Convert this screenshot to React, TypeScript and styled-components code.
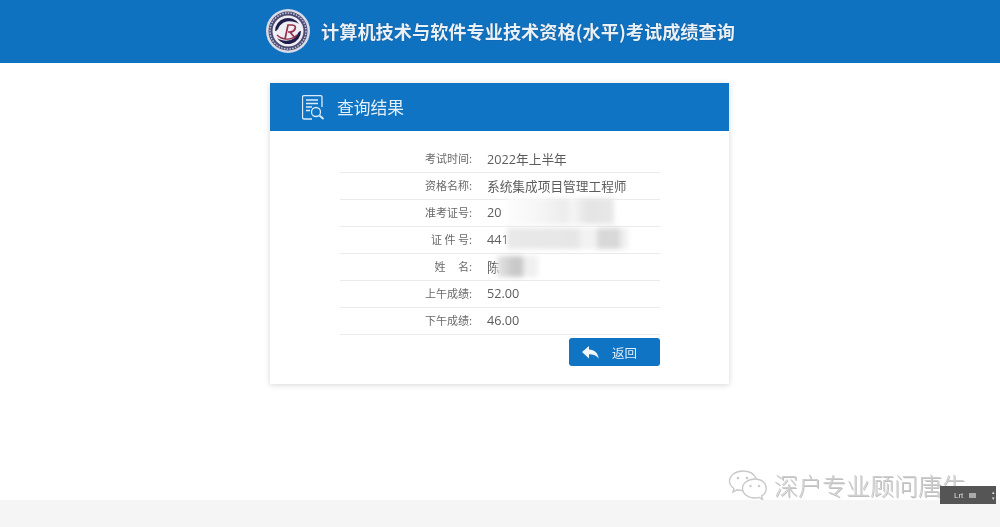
import styled, { createGlobalStyle } from 'styled-components';

const CJK = `"Noto Sans CJK SC", "Liberation Sans", sans-serif`;

const GlobalStyle = createGlobalStyle`
  html, body {
    margin: 0;
    padding: 0;
    background: #fff;
  }
  body {
    font-family: ${CJK};
  }
`;

const masks = {
  exam: {
    left: 166,
    top: -2,
    width: 108,
    height: 26,
    fill: 'linear-gradient(90deg, #fdfdfd 0%, #f6f6f6 30%, #ececec 55%, #f6f6f6 62%, #e4e4e4 75%, #e8e8e8 100%)',
  },
  id: {
    left: 167,
    top: 1,
    width: 121,
    height: 21,
    fill: 'linear-gradient(90deg, #e9e9e9 0%, #e6e6e6 58%, #f2f2f2 62%, #f2f2f2 73%, #d8d8d8 76%, #d8d8d8 92%, #f0f0f0 95%, #f0f0f0 100%)',
  },
  name: {
    left: 157,
    top: 2,
    width: 41,
    height: 21,
    fill: 'linear-gradient(90deg, #e6e6e6 0%, #c9c9c9 40%, #c9c9c9 62%, #f0f0f0 66%, #f0f0f0 100%)',
  },
};

const rows = [
  { label: '考试时间:', value: '2022年上半年' },
  { label: '资格名称:', value: '系统集成项目管理工程师' },
  { label: '准考证号:', value: '20', mask: masks.exam },
  { label: '证 件 号:', value: '441', mask: masks.id },
  { label: '姓\u00a0\u00a0\u00a0\u00a0\u00a0名:', value: '陈', mask: masks.name },
  { label: '上午成绩:', value: '52.00' },
  { label: '下午成绩:', value: '46.00' },
];

const Logo = () => (
  <svg width="44" height="44" viewBox="0 0 44 44">
    <circle cx="22" cy="22" r="22" fill="#d9dbe6" />
    <circle cx="22" cy="22" r="19.500" fill="#4a4a72" />
    <circle cx="22" cy="22" r="18" fill="none" stroke="#c9cad8" strokeWidth="1.400" strokeDasharray="1.500 1.300" />
    <circle cx="22" cy="22" r="15.500" fill="#eeeef3" />
    <path d="M9 22a13 13 0 0 1 24-7c-6-4-16-4-20 3-1 2-2 4-4 4z" fill="#1f1d4a" />
    <path d="M35 22a13 13 0 0 1-24 7c6 4 16 4 20-3 1-2 2-4 4-4z" fill="#1f1d4a" />
    <path d="M11 26c5 5 14 6 20 0" fill="none" stroke="#8d2a42" strokeWidth="1.300" />
    <path d="M19 30l3-14h4c3 0 4 2 3 4s-3 3-5 3l5 6M22 23h2" fill="none" stroke="#94304c" strokeWidth="1.700" />
  </svg>
);

const ResultIcon = () => (
  <svg width="23" height="25" viewBox="0 0 23 25" fill="none" stroke="#dcebf7" strokeWidth="1.300">
    <path d="M10 24H2a1.500 1.500 0 0 1-1.500-1.500V2A1.500 1.500 0 0 1 2 .7h16A1.500 1.500 0 0 1 20 2v10" />
    <path d="M4 5h12M4 8.500h12M4 12h6M4 15.500h4" strokeWidth="1.500" />
    <circle cx="14" cy="17" r="4.500" />
    <path d="M17.500 20.500l4 3.500" strokeWidth="1.800" />
  </svg>
);

const ReplyIcon = () => (
  <svg width="17" height="13" viewBox="0 0 17 13" fill="#f2f7fb">
    <path d="M0 6L7 0v3.500c5.500 0 9 3.500 9.700 9C14.500 9.500 11.500 8.300 7 8.300V12.500z" />
  </svg>
);

const WeChatIcon = () => (
  <svg width="42" height="30" viewBox="0 0 42 30" fill="#fff" stroke="#c9c9c9" strokeWidth="1.400">
    <path d="M15 1C7.500 1 1.500 5.500 1.500 11c0 3 1.800 5.700 4.500 7.500L5 22l4-2.200c1.500.4 3 .7 4.700.7C19 20 29 13 28 8 26 4 21 1 15 1z" />
    <path d="M27 9c-7 0-12.500 4.300-12.500 9.500S20 28 27 28c1.400 0 2.800-.2 4-.6l3.600 2-1-3.200c2.800-1.800 4.600-4.500 4.600-7.700C38.200 13.300 34 9 27 9z" />
    <circle cx="10" cy="8" r="1.300" fill="#c9c9c9" stroke="none" />
    <circle cx="19" cy="8" r="1.300" fill="#c9c9c9" stroke="none" />
    <circle cx="22.500" cy="16" r="1.200" fill="#c9c9c9" stroke="none" />
    <circle cx="31" cy="16" r="1.200" fill="#c9c9c9" stroke="none" />
  </svg>
);

const App = () => {
  return (
    <Page>
      <GlobalStyle />
      <TopBar>
        <Logo />
        <SiteTitle>计算机技术与软件专业技术资格(水平)考试成绩查询</SiteTitle>
      </TopBar>
      <Main>
        <Card>
          <CardHeader>
            <ResultIcon />
            <CardTitle>查询结果</CardTitle>
          </CardHeader>
          <CardBody>
            {rows.map((row) => (
              <Row key={row.label}>
                <Label>{row.label}</Label>
                <Value>{row.value}</Value>
                {row.mask && (
                  <Mask
                    $left={row.mask.left}
                    $top={row.mask.top}
                    $width={row.mask.width}
                    $height={row.mask.height}
                    $fill={row.mask.fill}
                  />
                )}
              </Row>
            ))}
            <Actions>
              <BackButton>
                <ReplyIcon />
                <span>返回</span>
              </BackButton>
            </Actions>
          </CardBody>
        </Card>
      </Main>
      <Footer />
      <Watermark>
        <WeChatIcon />
        <WatermarkText>深户专业顾问唐生</WatermarkText>
      </Watermark>
      <ImeBar>
        <span>Lrt</span>
        <ImeKey />
        <ImeDots>▴▾</ImeDots>
      </ImeBar>
    </Page>
  );
};

const Page = styled.div`
  position: relative;
  width: 1000px;
  height: 527px;
  overflow: hidden;
  display: flex;
  flex-direction: column;
  background: #fff;
`;

const TopBar = styled.header`
  height: 63px;
  flex: none;
  box-sizing: border-box;
  background: #0f72c1;
  display: flex;
  align-items: center;
  justify-content: center;
  gap: 11px;
  padding: 0 0 1px 1px;

  svg,
  h1 {
    filter: blur(0.5px);
  }
`;

const SiteTitle = styled.h1`
  margin: 0;
  font-size: 18.200px;
  font-weight: 700;
  color: #e8f1f8;
  white-space: nowrap;
  text-shadow: 0 0 1px rgba(0, 30, 70, 0.7);
`;

const Main = styled.main`
  flex: 1;
  display: flex;
  justify-content: center;
  padding: 20px 1px 0 0;
`;

const Card = styled.section`
  width: 459px;
  height: 301px;
  background: #fff;
  box-shadow: 0 1px 6px rgba(0, 0, 0, 0.16);
`;

const CardHeader = styled.div`
  height: 48px;
  background: #0f74c4;
  display: flex;
  align-items: center;
  gap: 12px;
  padding-left: 32px;

  svg,
  h2 {
    filter: blur(0.4px);
  }
`;

const CardTitle = styled.h2`
  margin: 0;
  font-size: 16.800px;
  font-weight: 400;
  color: #e6f0f8;
`;

const CardBody = styled.div`
  padding: 15px 69px 0 70px;
`;

const Row = styled.div`
  position: relative;
  height: 27px;
  box-sizing: border-box;
  padding-bottom: 2px;
  border-bottom: 1px solid #ebebeb;
  display: flex;
  align-items: center;
  gap: 15px;
`;

const Label = styled.span`
  width: 132px;
  text-align: right;
  font-size: 11px;
  color: #6a6a6a;
  white-space: pre;
  filter: blur(0.4px);
`;

const Value = styled.span`
  font-family: "Open Sans", ${CJK};
  font-size: 12.700px;
  color: #5c5c5c;
  filter: blur(0.4px);
`;

const Mask = styled.div<{ $left: number; $top: number; $width: number; $height: number; $fill: string }>`
  position: absolute;
  left: ${(p) => p.$left}px;
  top: ${(p) => p.$top}px;
  width: ${(p) => p.$width}px;
  height: ${(p) => p.$height}px;
  background: ${(p) => p.$fill};
  filter: blur(2.500px);
`;

const Actions = styled.div`
  display: flex;
  justify-content: flex-end;
  padding-top: 3px;
`;

const BackButton = styled.button`
  width: 91px;
  height: 28px;
  border: 0;
  border-radius: 3px;
  background: #0f74c4;
  color: #e3eef7;
  font-family: ${CJK};
  font-size: 12.500px;
  display: flex;
  align-items: center;
  gap: 13px;
  padding: 0 0 0 13px;

  svg,
  span {
    filter: blur(0.4px);
  }
`;

const Footer = styled.footer`
  height: 27px;
  flex: none;
  background: #f5f5f5;
`;

const Watermark = styled.div`
  position: absolute;
  left: 728px;
  top: 467px;
  display: flex;
  align-items: center;
  gap: 4px;
`;

const WatermarkText = styled.span`
  font-size: 24px;
  font-weight: 300;
  color: #cfcfcf;
  white-space: nowrap;
  text-shadow: 1px 1px 0 rgba(130, 130, 130, 0.5);
  filter: blur(0.4px);
`;

const ImeBar = styled.div`
  position: absolute;
  left: 940px;
  top: 486px;
  width: 56px;
  height: 18px;
  box-sizing: border-box;
  background: #555;
  color: #ddd;
  font-family: "Liberation Sans", sans-serif;
  font-size: 8px;
  display: flex;
  align-items: center;
  padding-left: 14px;
  gap: 6px;
  filter: blur(0.5px);
`;

const ImeKey = styled.i`
  width: 9px;
  height: 5px;
  background: #aaa;
`;

const ImeDots = styled.span`
  font-size: 5px;
  margin-left: 8px;
  writing-mode: vertical-rl;
`;

export default App;
